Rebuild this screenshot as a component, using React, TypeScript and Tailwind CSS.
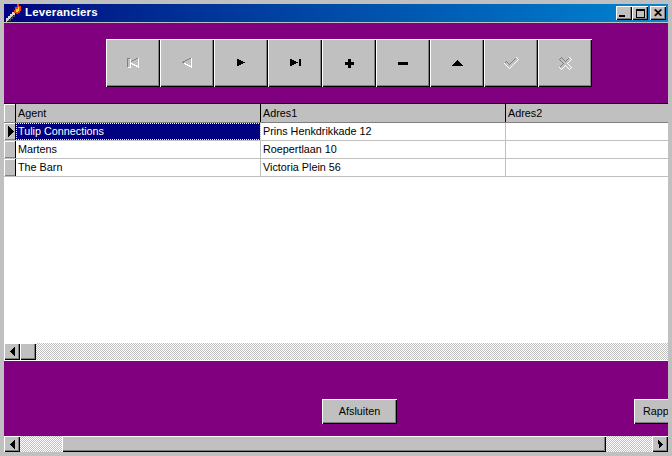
const bevel = "shadow-[inset_1px_1px_0_#ffffff,inset_-1px_-1px_0_#000000,inset_-2px_-2px_0_#808080]";
const trough = "bg-[repeating-conic-gradient(#c0c0c0_0_25%,#ffffff_0_50%)] bg-[length:2px_2px]";

function NavIcon({ name }: { name: string }) {
  if (name === "first")
    return (
      <svg width="13" height="10" viewBox="0 0 13 10" shapeRendering="crispEdges">
        <path d="M0 0h3v1h-2v8h-1zM10 0h1v1h-2v1h-2v1h-2v1h-1v1h-1v-1h1v-1h1v-1h2v-1h2v-1h1z" fill="#808080" />
        <path d="M3 1h1v9h-3v-1h2zM11 0h1v10h-1v-1h-2v-1h-2v-1h-2v-1h-1v-1h2v1h2v1h2v1h1z" fill="#ffffff" />
      </svg>
    );
  if (name === "prior")
    return (
      <svg width="11" height="10" viewBox="0 0 11 10" shapeRendering="crispEdges">
        <path d="M8 0h1v1h-2v1h-2v1h-2v1h-1v1h-2v-1h1v-1h2v-1h2v-1h2v-1z" fill="#808080" />
        <path d="M9 0h1v10h-1v-1h-2v-1h-2v-1h-2v-1h-1v-1h2v1h2v1h2v1h1z" fill="#ffffff" />
      </svg>
    );
  if (name === "next")
    return (
      <svg width="8" height="8" viewBox="0 0 8 8" shapeRendering="crispEdges">
        <path d="M0 0h2v1h2v1h2v1h2v1h-2v1h-2v1h-2v1h-2z" fill="#000000" />
      </svg>
    );
  if (name === "last")
    return (
      <svg width="11" height="8" viewBox="0 0 11 8" shapeRendering="crispEdges">
        <path d="M0 0h2v1h2v1h2v1h2v1h-2v1h-2v1h-2v1h-2zM9 0h2v7h-2z" fill="#000000" />
      </svg>
    );
  if (name === "plus")
    return (
      <svg width="9" height="9" viewBox="0 0 9 9" shapeRendering="crispEdges">
        <path d="M3 0h3v3h3v3h-3v3h-3v-3h-3v-3h3z" fill="#000000" />
      </svg>
    );
  if (name === "minus")
    return (
      <svg width="10" height="3" viewBox="0 0 10 3" shapeRendering="crispEdges">
        <path d="M0 0h10v3h-10z" fill="#000000" />
      </svg>
    );
  if (name === "up")
    return (
      <svg width="11" height="6" viewBox="0 0 11 6" shapeRendering="crispEdges">
        <path d="M5 0h1v1h1v1h1v1h1v1h1v1h1v1h-11v-1h1v-1h1v-1h1v-1h1v-1h1z" fill="#000000" />
      </svg>
    );
  if (name === "check")
    return (
      <svg width="15" height="12" viewBox="0 0 15 12" fill="none" shapeRendering="crispEdges">
        <polyline points="0.5,6.5 2.5,4.5 5.5,7.5 12.5,0.5" stroke="#808080" />
        <polyline points="12.5,0.5 14.5,2.5 5.5,11.5 0.5,6.5" stroke="#ffffff" />
      </svg>
    );
  return (
    <svg width="13" height="13" viewBox="0 0 13 13" fill="none" shapeRendering="crispEdges">
      <polyline points="0.5,10.5 4.5,6.5 0.5,2.5 2.5,0.5 6.5,4.5 10.5,0.5" stroke="#808080" />
      <polyline points="10.5,0.5 12.5,2.5 8.5,6.5 12.5,10.5 10.5,12.5 6.5,8.5 2.5,12.5 0.5,10.5" stroke="#ffffff" />
    </svg>
  );
}

function Torch() {
  return (
    <svg width="16" height="18" viewBox="0 0 16 18" shapeRendering="crispEdges">
      <path d="M0 14h2v-2h2v-2h2v-2h3v3h-2v2h-2v2h-2v2h-2v1h-1z" fill="#d8d8d8" />
      <path d="M2 16h2v-2h2v-2h2v-1h1v2h-2v2h-2v2h-3z" fill="#505060" />
      <path d="M9 3h2v-3h2v2h2v5h-1v2h-2v1h-2v-1h-2v-3h1z" fill="#f04010" />
      <path d="M10 5h2v-2h1v4h-1v1h-2z" fill="#ffd040" />
    </svg>
  );
}

function CaptionButton({ children, className = "" }: { children: React.ReactNode; className?: string }) {
  return (
    <div className={`w-4 h-3.5 bg-[#c0c0c0] flex items-center justify-center ${bevel} ${className}`}>{children}</div>
  );
}

function Arrow({ dir }: { dir: "left" | "right" }) {
  return (
    <svg width="5" height="9" viewBox="0 0 5 9" shapeRendering="crispEdges">
      {dir === "left" ? (
        <path d="M4 0h1v9h-1v-1h-1v-1h-1v-1h-1v-1h-1v-1h1v-1h1v-1h1v-1h1z" fill="#000000" />
      ) : (
        <path d="M0 0h1v1h1v1h1v1h1v1h1v1h-1v1h-1v1h-1v1h-1z" fill="#000000" />
      )}
    </svg>
  );
}

const navButtons = ["first", "prior", "next", "last", "plus", "minus", "up", "check", "cancel"];

const rows = [
  ["Tulip Connections", "Prins Henkdrikkade 12"],
  ["Martens", "Roepertlaan 10"],
  ["The Barn", "Victoria Plein 56"],
];

export default function App() {
  return (
    <div className="w-[672px] h-[456px] bg-[#c0c0c0] overflow-hidden font-['Liberation_Sans',sans-serif] text-[10.8px] text-black flex flex-col pt-1 px-1">
      {/* title bar */}
      <div className="h-[18px] shrink-0 flex items-center bg-gradient-to-r from-[#000080] to-[#1084d0] pl-0.5 pr-0.5">
        <Torch />
        <span className="ml-[3px] text-white font-bold text-[11.5px] leading-none tracking-[0.15px]">Leveranciers</span>
        <div className="ml-auto flex items-center">
          <CaptionButton>
            <div className="w-1.5 h-0.5 bg-black mt-1.5 -ml-1" />
          </CaptionButton>
          <CaptionButton>
            <div className="w-[9px] h-[9px] border border-black border-t-2" />
          </CaptionButton>
          <CaptionButton className="ml-0.5">
            <span className="font-bold text-[12px] leading-none">✕</span>
          </CaptionButton>
        </div>
      </div>
      <div className="h-px shrink-0 bg-[#c0c0c0]" />

      {/* toolbar */}
      <div className="h-[80px] shrink-0 bg-[#800080] pt-4 pl-[102px] flex">
        {navButtons.map((name) => (
          <div key={name} className={`w-[54px] h-12 bg-[#c0c0c0] flex items-center justify-center ${bevel}`}>
            <NavIcon name={name} />
          </div>
        ))}
      </div>

      {/* grid */}
      <div className="h-[257px] shrink-0 bg-white border-t border-black flex flex-col">
        <div className="h-[19px] shrink-0 flex bg-[#c0c0c0] border-b border-[#808080]">
          <div className="w-3 border-r border-black shadow-[inset_1px_1px_0_#ffffff]" />
          <div className="w-[245px] border-r border-black pl-0.5 leading-[18px]">Agent</div>
          <div className="w-[245px] border-r border-black pl-0.5 leading-[18px]">Adres1</div>
          <div className="flex-1 pl-0.5 leading-[18px]">Adres2</div>
        </div>
        {rows.map((row, i) => (
          <div key={row[0]} className="h-[18px] shrink-0 flex border-b border-[#c0c0c0]">
            <div className="w-3 bg-[#c0c0c0] border-r border-black shadow-[inset_1px_1px_0_#ffffff,inset_0_-1px_0_#808080] flex items-center justify-end pr-[1px]">
              {i === 0 && (
                <svg width="6" height="11" viewBox="0 0 6 11" shapeRendering="crispEdges">
                  <path d="M0 0h1v1h1v1h1v1h1v1h1v1h1v1h-1v1h-1v1h-1v1h-1v1h-1v1h-1z" fill="#000000" />
                </svg>
              )}
            </div>
            <div
              className={`w-[245px] border-r border-[#c0c0c0] pl-0.5 leading-[17px] ${
                i === 0 ? "bg-[#000080] text-white outline-1 outline-dotted -outline-offset-1 outline-[#ffff80]" : ""
              }`}
            >
              {row[0]}
            </div>
            <div className="w-[245px] border-r border-[#c0c0c0] pl-0.5 leading-[17px]">{row[1]}</div>
            <div className="flex-1" />
          </div>
        ))}
        <div className="flex-1" />
        <div className={`h-[17px] shrink-0 flex ${trough}`}>
          <div className={`w-4 bg-[#c0c0c0] flex items-center justify-center ${bevel}`}>
            <Arrow dir="left" />
          </div>
          <div className={`w-4 bg-[#c0c0c0] ${bevel}`} />
        </div>
      </div>

      {/* bottom panel */}
      <div className="h-[76px] shrink-0 bg-[#800080] border-t border-white overflow-hidden flex pl-[318px] pt-[38px]">
        <div className={`w-[75px] h-[25px] shrink-0 bg-[#c0c0c0] flex items-center justify-center ${bevel}`}>Afsluiten</div>
        <div className="ml-[237px] w-[34px] h-[25px] shrink-0 bg-[#c0c0c0] flex items-center pl-[9px] overflow-hidden whitespace-nowrap shadow-[inset_1px_1px_0_#ffffff,inset_0_-1px_0_#000000,inset_0_-2px_0_#808080]">Rapp</div>
      </div>

      {/* form scrollbar */}
      <div className={`h-4 shrink-0 flex ${trough}`}>
        <div className={`w-4 bg-[#c0c0c0] flex items-center justify-center ${bevel}`}>
          <Arrow dir="left" />
        </div>
        <div className={`ml-[42px] w-[544px] bg-[#c0c0c0] ${bevel}`} />
        <div className={`ml-auto w-4 bg-[#c0c0c0] flex items-center justify-center ${bevel}`}>
          <Arrow dir="right" />
        </div>
      </div>
    </div>
  );
}
